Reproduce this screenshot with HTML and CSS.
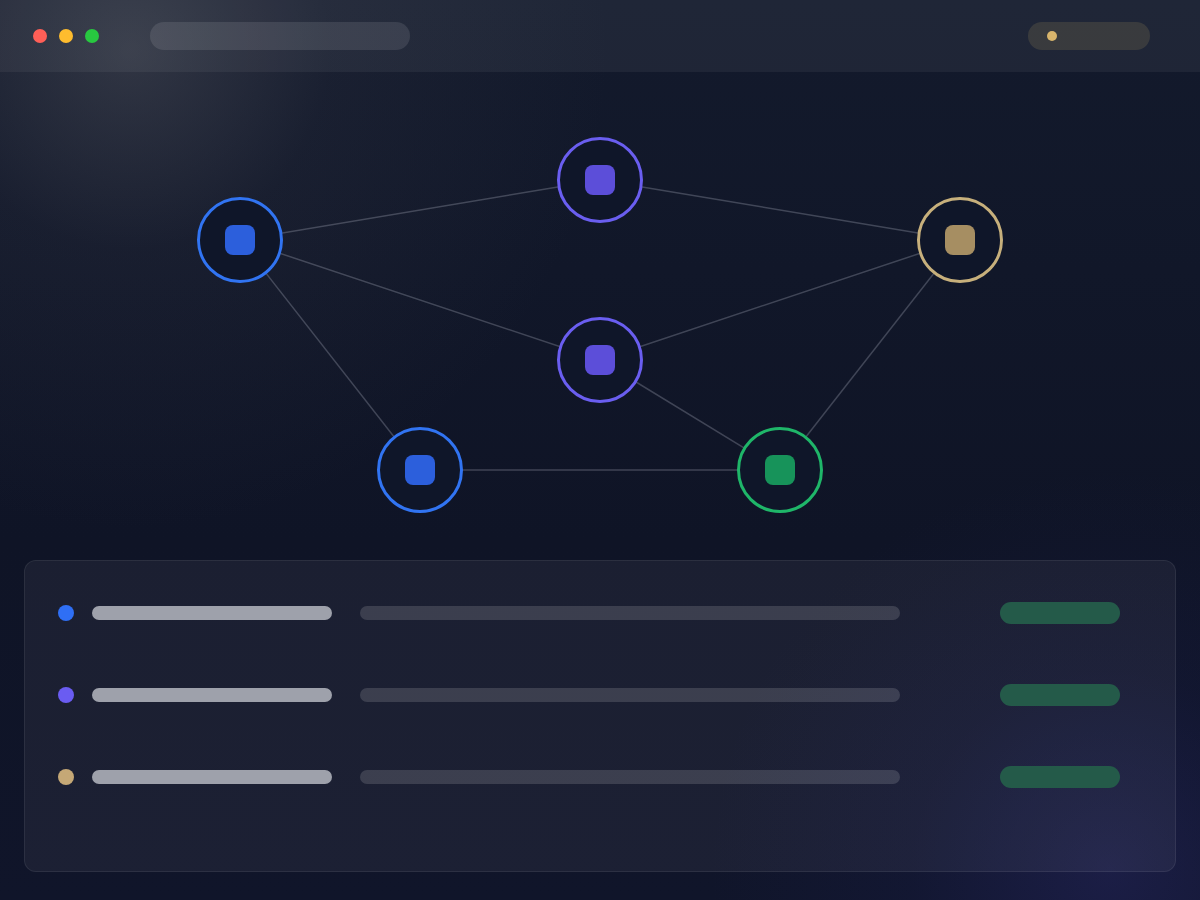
FILE: index.html
```html
<!DOCTYPE html>
<html lang="en">
<head>
<meta charset="utf-8">
<title>Network</title>
<link rel="stylesheet" href="styles.css">
</head>
<body>
<div class="app">
  <header class="topbar">
    <div class="lights">
      <span class="light red"></span>
      <span class="light yellow"></span>
      <span class="light green"></span>
    </div>
    <div class="address"></div>
    <div class="status"><span class="status-dot"></span></div>
  </header>

  <section class="graph">
    <svg class="edges" width="1200" height="488" viewBox="0 72 1200 488">
      <g stroke="rgba(200,205,220,0.26)" stroke-width="1.5" fill="none">
        <line x1="240" y1="240" x2="600" y2="180"/>
        <line x1="600" y1="180" x2="960" y2="240"/>
        <line x1="240" y1="240" x2="600" y2="360"/>
        <line x1="600" y1="360" x2="960" y2="240"/>
        <line x1="240" y1="240" x2="420" y2="470"/>
        <line x1="600" y1="360" x2="780" y2="470"/>
        <line x1="420" y1="470" x2="780" y2="470"/>
        <line x1="960" y1="240" x2="780" y2="470"/>
      </g>
    </svg>
    <div class="node blue" style="left:197px;top:125px"><span class="core"></span></div>
    <div class="node purple" style="left:557px;top:65px"><span class="core"></span></div>
    <div class="node tan" style="left:917px;top:125px"><span class="core"></span></div>
    <div class="node purple" style="left:557px;top:245px"><span class="core"></span></div>
    <div class="node blue" style="left:377px;top:355px"><span class="core"></span></div>
    <div class="node green" style="left:737px;top:355px"><span class="core"></span></div>
  </section>

  <section class="panel">
    <div class="row">
      <span class="dot c-blue"></span>
      <span class="bar name"></span>
      <span class="bar desc"></span>
      <span class="pill"></span>
    </div>
    <div class="row">
      <span class="dot c-purple"></span>
      <span class="bar name"></span>
      <span class="bar desc"></span>
      <span class="pill"></span>
    </div>
    <div class="row">
      <span class="dot c-tan"></span>
      <span class="bar name"></span>
      <span class="bar desc"></span>
      <span class="pill"></span>
    </div>
  </section>
</div>
</body>
</html>
```

FILE: styles.css
```css
* { box-sizing: border-box; }
html, body {
  margin: 0;
  padding: 0;
  width: 1200px;
  height: 900px;
  overflow: hidden;
  font-family: "Inter", "Liberation Sans", sans-serif;
}
body {
  background-color: #0e1325;
  background-image:
    radial-gradient(circle at 130px 50px, rgba(120,120,125,0.3) 0px, rgba(80,80,90,0.12) 200px, rgba(14,19,37,0) 480px),
    radial-gradient(circle at 1110px 870px, rgba(60,55,150,0.26) 0px, rgba(40,40,120,0.1) 200px, rgba(14,19,37,0) 400px),
    linear-gradient(180deg, #131a2c 0%, #0f1426 60%, #10152a 100%);
}
.app {
  display: flex;
  flex-direction: column;
  height: 900px;
}
.topbar {
  height: 72px;
  flex: 0 0 72px;
  display: flex;
  align-items: center;
  padding: 0 50px 0 33px;
  background: rgba(255,255,255,0.055);
}
.lights {
  display: flex;
  gap: 12px;
}
.light {
  width: 14px;
  height: 14px;
  border-radius: 50%;
  display: block;
}
.light.red { background: #ff5f57; }
.light.yellow { background: #febc2e; }
.light.green { background: #28c840; }
.address {
  margin-left: 51px;
  width: 260px;
  height: 28px;
  border-radius: 14px;
  background: rgba(255,255,255,0.1);
}
.status {
  margin-left: auto;
  width: 122px;
  height: 28px;
  border-radius: 14px;
  background: rgba(120,110,80,0.3);
  display: flex;
  align-items: center;
  padding-left: 19px;
}
.status-dot {
  width: 10px;
  height: 10px;
  border-radius: 50%;
  background: #d8b56c;
}
.graph {
  position: relative;
  height: 488px;
  flex: 0 0 488px;
}
.edges {
  position: absolute;
  left: 0;
  top: 0;
}
.node {
  position: absolute;
  width: 86px;
  height: 86px;
  border-radius: 50%;
  border: 3px solid;
  background: #0f1629;
  display: flex;
  align-items: center;
  justify-content: center;
}
.core {
  width: 30px;
  height: 30px;
  border-radius: 8px;
}
.node.blue { border-color: #3174f2; }
.node.blue .core { background: #2c5fdc; }
.node.purple { border-color: #6a5ef0; }
.node.purple .core { background: #5c4ed9; }
.node.tan { border-color: #c7b07c; }
.node.tan .core { background: #a68e62; }
.node.green { border-color: #1fb669; }
.node.green .core { background: #17935a; }

.panel {
  margin: 0 24px;
  height: 312px;
  border-radius: 12px;
  background: rgba(255,255,255,0.05);
  border: 1px solid rgba(255,255,255,0.07);
  padding: 41px 55px 0 33px;
  display: flex;
  flex-direction: column;
  gap: 60px;
}
.row {
  display: flex;
  align-items: center;
  height: 22px;
}
.dot {
  width: 16px;
  height: 16px;
  border-radius: 50%;
  flex: 0 0 16px;
}
.c-blue { background: #2f6ff5; }
.c-purple { background: #6a5cf2; }
.c-tan { background: #c5a876; }
.bar {
  height: 14px;
  border-radius: 7px;
  display: block;
}
.bar.name {
  margin-left: 18px;
  width: 240px;
  background: #9ea1ab;
}
.bar.desc {
  margin-left: 28px;
  width: 540px;
  background: rgba(255,255,255,0.14);
}
.pill {
  margin-left: auto;
  width: 120px;
  height: 22px;
  border-radius: 11px;
  background: #245a49;
}
```
